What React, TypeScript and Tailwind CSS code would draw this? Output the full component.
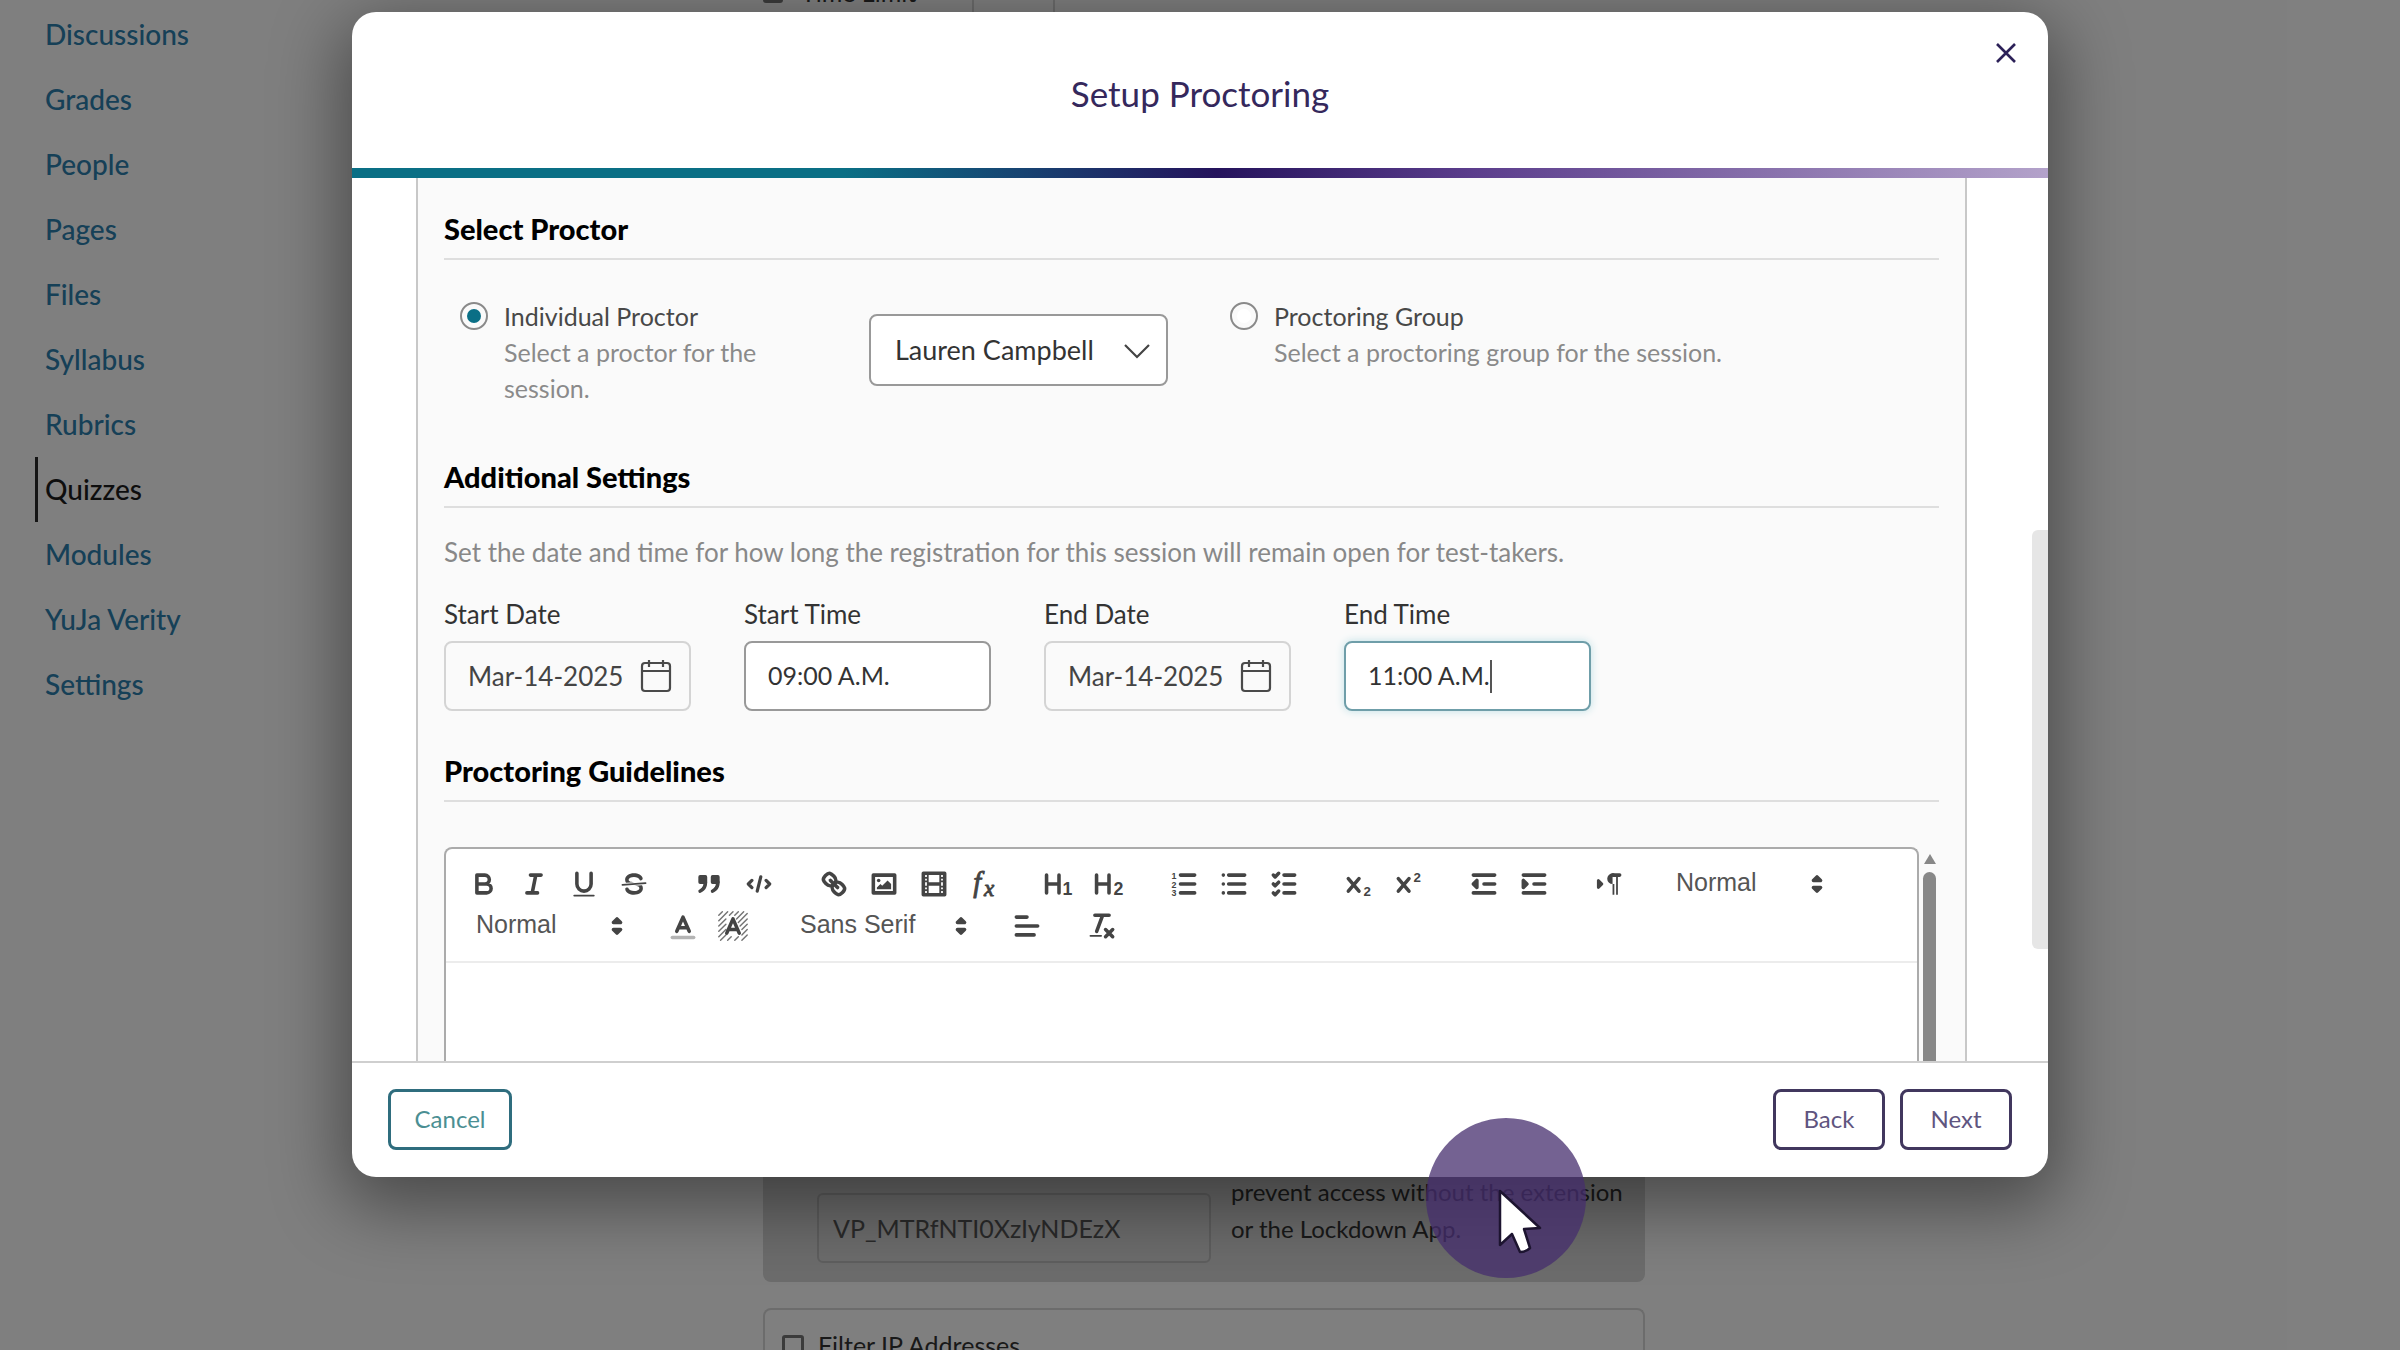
import type { ReactNode } from "react";

const navItems = [
  "Discussions",
  "Grades",
  "People",
  "Pages",
  "Files",
  "Syllabus",
  "Rubrics",
  "Quizzes",
  "Modules",
  "YuJa Verity",
  "Settings",
];

function CourseNav() {
  return (
    <nav aria-label="Course" className="w-[763px] shrink-0 pt-[2px] pl-[35px]">
      <ul>
        {navItems.map((item) => (
          <li key={item}>
            <a
              href="#"
              aria-current={item === "Quizzes" ? "page" : undefined}
              className={
                item === "Quizzes"
                  ? "flex h-[65px] items-center border-l-[3px] border-[#2a2a2a] pb-[2px] pl-[7px] text-[28px] font-medium text-[#1c1c1c]"
                  : "flex h-[65px] items-center border-l-[3px] border-transparent pb-[2px] pl-[7px] text-[28px] font-medium text-[#2c80ae]"
              }
            >
              {item}
            </a>
          </li>
        ))}
      </ul>
    </nav>
  );
}

function QuizSettings() {
  return (
    <main className="mr-[755px] flex min-w-0 flex-1 flex-col text-[25px] text-[#333]">
      <div className="-mt-[25px] flex h-[45px] shrink-0">
        <label className="flex h-[36px] w-[209px] items-center gap-[18px]">
          <input type="checkbox" className="size-5 appearance-none rounded-[3px] border-[3px] border-[#777]" />
          Time Limit
        </label>
        <div className="w-[83px] border-x-2 border-[#d8d8d8]" />
      </div>
      <section className="flex flex-1 flex-col justify-end rounded-b-lg bg-[#d8d8d8] pb-[19px] pl-[54px]">
        <div className="flex gap-5">
          <input
            aria-label="Access code"
            readOnly
            value="VP_MTRfNTI0XzIyNDEzX"
            className="h-[70px] w-[394px] shrink-0 rounded-md border-2 border-[#bcbcbc] bg-transparent px-[14px] text-[#555]"
          />
          <p className="-mt-5 text-2xl leading-[37px] whitespace-nowrap">
            prevent access without the extension
            <br />
            or the Lockdown App.
          </p>
        </div>
      </section>
      <section className="mt-[26px] h-[42px] shrink-0 overflow-hidden rounded-t-lg border-2 border-b-0 border-[#d8d8d8] px-[17px] pt-[17px]">
        <label className="flex items-center gap-[14px]">
          <input type="checkbox" className="size-[22px] appearance-none rounded-[3px] border-[3px] border-[#777]" />
          Filter IP Addresses
        </label>
      </section>
    </main>
  );
}

function SectionTitle({ children }: { children: ReactNode }) {
  return (
    <h2 className="flex h-[60px] shrink-0 items-center border-b-2 border-[#dedede] text-[29px] font-black text-black">
      {children}
    </h2>
  );
}

function RadioOption({ id, title, text, checked }: { id: string; title: string; text: string; checked?: boolean }) {
  return (
    <div className="flex items-start gap-4 text-[25px]">
      <input
        type="radio"
        name="proctor"
        id={id}
        defaultChecked={checked}
        className="mt-1 size-7 shrink-0 appearance-none rounded-full border-2 border-[#8a8a8a] bg-white bg-clip-content p-[5px] checked:bg-[#0a6f86]"
      />
      <label htmlFor={id} className="block leading-[36px] text-[#484848]">
        {title}
        <span className="block text-[#8a8a8a]">{text}</span>
      </label>
    </div>
  );
}

function CalendarIcon() {
  return (
    <svg viewBox="0 0 32 34" className="h-[34px] w-[32px] shrink-0" fill="none" stroke="#4a4a4a" strokeWidth="2.2">
      <rect x="2" y="4" width="28" height="28" rx="3" />
      <path d="M2 12H30M9 1V8M23 1V8" />
    </svg>
  );
}

function DateField({ id, label }: { id: string; label: string }) {
  return (
    <div className="w-[247px]">
      <label htmlFor={id} className="block leading-[36px] text-[#333]">
        {label}
      </label>
      <div className="mt-[9px] flex h-[70px] items-center rounded-lg border-2 border-[#d4d4d4] pr-[17px] pl-[22px]">
        <input id={id} readOnly value="Mar-14-2025" className="min-w-0 flex-1 bg-transparent text-[#444] outline-none" />
        <CalendarIcon />
      </div>
    </div>
  );
}

function TimeField({ id, label, value, active }: { id: string; label: string; value: string; active?: boolean }) {
  return (
    <div className="w-[247px]">
      <label htmlFor={id} className="block leading-[36px] text-[#333]">
        {label}
      </label>
      <div
        className={
          active
            ? "mt-[9px] flex h-[70px] items-center rounded-lg border-2 border-[#6f9ea9] bg-white px-[22px] shadow-[0_0_8px_#bfe0e6]"
            : "mt-[9px] flex h-[70px] items-center rounded-lg border-2 border-[#999] bg-white px-[22px]"
        }
      >
        <input id={id} readOnly value={value} className="field-sizing-content bg-transparent text-[25px] text-[#333] outline-none" />
        {active && <span className="h-[33px] w-[2px] bg-[#555]" />}
      </div>
    </div>
  );
}

function Icon({ children }: { children: ReactNode }) {
  return (
    <svg viewBox="0 0 18 18" className="size-8" fill="none" stroke="#444" strokeWidth="2" strokeLinecap="round" strokeLinejoin="round">
      {children}
    </svg>
  );
}

function Tool({ label, children }: { label: string; children: ReactNode }) {
  return (
    <button type="button" aria-label={label} className="flex h-[42px] w-[50px] items-center justify-center">
      <Icon>{children}</Icon>
    </button>
  );
}

function Group({ children }: { children: ReactNode }) {
  return <div className="flex">{children}</div>;
}

function Picker({ label, value, wide }: { label: string; value: string; wide?: boolean }) {
  return (
    <div className={wide ? "flex h-[42px] w-[194px] items-center" : "flex h-[42px] w-[174px] items-center"}>
      <select
        aria-label={label}
        className="min-w-0 flex-1 appearance-none bg-transparent pb-[3px] pl-[17px] font-['Liberation_Sans',sans-serif] text-[25px] text-[#555]"
      >
        <option>{value}</option>
      </select>
      <Icon>
        <path d="M7 11L9 13L11 11ZM7 7L9 5L11 7Z" fill="#444" />
      </Icon>
    </div>
  );
}

const serifItalic = "font-['Liberation_Serif',serif] italic";
const sans = "font-['Liberation_Sans',sans-serif] font-bold";

function HeaderShape() {
  return <path d="M2 4V14M9 4V14M2 9H9" />;
}

function LetterShape() {
  return <path d="M5.5 13L9 5L12.5 13M6.4 11H11.6" />;
}

function Toolbar() {
  return (
    <div role="toolbar" aria-label="Formatting" className="flex flex-wrap gap-x-[25px] border-b-2 border-[#ececec] py-[14px] pl-[13px]">
      <Group>
        <Tool label="Bold">
          <path d="M5 4H9.5A2.5 2.5 0 0 1 9.5 9H5ZM5 9H10.5A2.5 2.5 0 0 1 10.5 14H5Z" />
        </Tool>
        <Tool label="Italic">
          <path d="M7 4H13M5 14H11M8 14L10 4" />
        </Tool>
        <Tool label="Underline">
          <path d="M5 3V9a4 4 0 0 0 8 0V3" />
          <rect x="3" y="15" width="12" height="1" rx="0.5" fill="#444" stroke="none" />
        </Tool>
        <Tool label="Strikethrough">
          <path d="M15.5 8.5L2.5 9.5" strokeWidth="1" />
          <g fill="#444" stroke="none">
            <path d="M9.007,8C6.542,7.791,6,7.519,6,6.5,6,5.792,7.283,5,9,5c1.571,0,2.765.679,2.969,1.309a1,1,0,0,0,1.9-.617C13.356,4.106,11.354,3,9,3,6.2,3,4,4.538,4,6.5a3.2,3.2,0,0,0,.5,1.843Z" />
            <path d="M8.984,10C11.457,10.208,12,10.479,12,11.5c0,0.708-1.283,1.5-3,1.5-1.571,0-2.765-.679-2.969-1.309a1,1,0,1,0-1.9.617C4.644,13.894,6.646,15,9,15c2.8,0,5-1.538,5-3.5a3.2,3.2,0,0,0-.5-1.843Z" />
          </g>
        </Tool>
      </Group>
      <Group>
        <Tool label="Quote">
          <g fill="#444">
            <rect x="4" y="5" width="3" height="3" />
            <rect x="11" y="5" width="3" height="3" />
            <path d="M7,8c0,4.031-3,5-3,5" />
            <path d="M14,8c0,4.031-3,5-3,5" />
          </g>
        </Tool>
        <Tool label="Code">
          <path d="M5 7L3 9L5 11M13 7L15 9L13 11M10 5L8 13" strokeWidth="1.8" />
        </Tool>
      </Group>
      <Group>
        <Tool label="Link">
          <path d="M7 7L11 11" />
          <path d="M8.9,4.577a3.476,3.476,0,0,1,.36,4.679A3.476,3.476,0,0,1,4.577,8.9C3.185,7.5,2.035,6.4,4.217,4.217S7.5,3.185,8.9,4.577Z" />
          <path d="M13.423,9.1a3.476,3.476,0,0,0-4.679-.36,3.476,3.476,0,0,0,.36,4.679c1.392,1.392,2.5,2.542,4.679.36S14.815,10.5,13.423,9.1Z" />
        </Tool>
        <Tool label="Image">
          <rect x="3" y="4" width="12" height="10" />
          <circle cx="6" cy="7" r="1" fill="#444" stroke="none" />
          <path d="M5 12V11L7 9L8 10L11 7L13 9V12Z" fill="#444" stroke="none" />
        </Tool>
        <Tool label="Video">
          <rect x="3" y="3" width="12" height="12" />
          <path
            d="M5 3h1v12H5ZM12 3h1v12H12ZM5 8h8v2H5ZM3 5h3v1H3ZM3 7h3v1H3ZM3 10h3v1H3ZM3 12h3v1H3ZM12 5h3v1H12ZM12 7h3v1H12ZM12 10h3v1H12ZM12 12h3v1H12Z"
            fill="#444"
            stroke="none"
          />
        </Tool>
        <Tool label="Formula">
          <text x="3" y="13.5" fontSize="16" fill="#444" stroke="#444" strokeWidth="0.5" className={serifItalic}>f</text>
          <text x="9" y="16" fontSize="13" fill="#444" stroke="#444" strokeWidth="0.5" className={serifItalic}>x</text>
        </Tool>
      </Group>
      <Group>
        <Tool label="Heading 1">
          <HeaderShape />
          <text x="11" y="15" fontSize="10" fill="#444" stroke="none" className={sans}>1</text>
        </Tool>
        <Tool label="Heading 2">
          <HeaderShape />
          <text x="11.5" y="15" fontSize="10" fill="#444" stroke="none" className={sans}>2</text>
        </Tool>
      </Group>
      <Group>
        <Tool label="Numbered list">
          <path d="M7 4H15M7 9H15M7 14H15" />
          <g fill="#444" stroke="none" fontSize="5" className={sans}>
            <text x="2" y="6">1</text>
            <text x="2" y="11">2</text>
            <text x="2" y="16">3</text>
          </g>
        </Tool>
        <Tool label="Bulleted list">
          <path d="M6 4H15M6 9H15M6 14H15M3 4H3M3 9H3M3 14H3" />
        </Tool>
        <Tool label="Checklist">
          <path d="M9 4H15M9 9H15M9 14H15M3 4L4 5L6 3M3 9L4 10L6 8M3 14L4 15L6 13" />
        </Tool>
      </Group>
      <Group>
        <Tool label="Subscript">
          <path d="M3 6L9 13M9 6L3 13" />
          <text x="11.5" y="16" fontSize="7.5" fill="#444" stroke="none" className={sans}>2</text>
        </Tool>
        <Tool label="Superscript">
          <path d="M3 6L9 13M9 6L3 13" />
          <text x="11.5" y="8" fontSize="7.5" fill="#444" stroke="none" className={sans}>2</text>
        </Tool>
      </Group>
      <Group>
        <Tool label="Outdent">
          <path d="M3 14H15M3 4H15M9 9H15" />
          <path d="M5 7V11L3 9Z" fill="#444" />
        </Tool>
        <Tool label="Indent">
          <path d="M3 14H15M3 4H15M9 9H15" />
          <path d="M3 7V11L5 9Z" fill="#444" />
        </Tool>
      </Group>
      <Group>
        <Tool label="Text direction">
          <path d="M3 11L5 9L3 7Z" fill="#444" strokeWidth="1.6" />
          <path d="M11 4H15" />
          <path d="M11,3a3,3,0,0,0,0,6h1V3ZM11 4h1v11h-1ZM13 4h1v11h-1Z" fill="#444" stroke="none" />
        </Tool>
      </Group>
      <Picker label="Heading style" value="Normal" />
      <Picker label="Text size" value="Normal" />
      <Group>
        <Tool label="Text colour">
          <path d="M3 15.5H15" opacity="0.4" />
          <g transform="translate(0 -1)">
            <LetterShape />
          </g>
        </Tool>
        <Tool label="Background colour">
          <path
            d="M1 3L3 1M1 6L6 1M1 9L5 5M1 12L5 8M1 15L5 11M2 17L5 14M7 3L9 1M10 3L12 1M11 5L15 1M12 7L17 2M13 9L17 5M14 11L17 8M14 14L17 11M14 17L17 14M6 17L8 15M10 17L12 15"
            strokeWidth="0.8"
            opacity="0.75"
          />
          <LetterShape />
        </Tool>
      </Group>
      <Picker label="Font" value="Sans Serif" wide />
      <Group>
        <Tool label="Align">
          <path d="M3 9H15M3 14H13M3 4H9" />
        </Tool>
      </Group>
      <Group>
        <Tool label="Clear formatting">
          <path d="M5 3H13M6 12L9.350 3M11 11L15 15M15 11L11 15" />
          <rect x="2" y="14" width="7" height="1" rx="0.5" fill="#444" stroke="none" />
        </Tool>
      </Group>
    </div>
  );
}

function Editor() {
  return (
    <div className="flex flex-1 gap-1 pr-[3px]">
      <div className="flex flex-1 flex-col rounded-t-lg border-2 border-b-0 border-[#ababab] bg-white">
        <Toolbar />
        <textarea aria-label="Proctoring guidelines" className="flex-1 resize-none bg-transparent p-6 outline-none" />
      </div>
      <div className="flex w-[13px] flex-col items-center pt-[7px]">
        <svg viewBox="0 0 12 10" className="h-[10px] w-[12px]">
          <path d="M6 0L12 10H0Z" fill="#888" />
        </svg>
        <div className="mt-2 w-full flex-1 rounded-t-full bg-[#888]" />
      </div>
    </div>
  );
}

function ProctoringDialog() {
  return (
    <div
      role="dialog"
      aria-labelledby="dialog-title"
      className="relative flex flex-1 flex-col overflow-hidden rounded-[24px] bg-white text-[26px] shadow-[0_20px_70px_10px_rgba(0,0,0,0.42)]"
    >
      <header className="flex h-[156px] shrink-0 items-center justify-center pt-[6px]">
        <h1 id="dialog-title" className="text-[35px] text-[#35285c]">
          Setup Proctoring
        </h1>
        <button type="button" aria-label="Close" className="absolute top-[26px] right-[27px] flex size-[30px] items-center justify-center">
          <svg viewBox="0 0 20 20" className="size-5" stroke="#2c2158" strokeWidth="2.6">
            <path d="M1 1L19 19M19 1L1 19" />
          </svg>
        </button>
      </header>
      <div className="h-[10px] shrink-0 bg-[linear-gradient(90deg,#0a6f85_0%,#0a6f85_29%,#25135c_51%,#5b3d8c_66%,#b3a2ca_100%)]" />
      <div className="flex min-h-0 flex-1 overflow-hidden pl-[64px]">
        <div className="flex flex-1 flex-col border-x-2 border-[#c8c8c8] bg-[#fafafa] px-[26px] pt-[22px]">
          <SectionTitle>Select Proctor</SectionTitle>
          <div className="mt-[38px] flex items-start pl-[16px]">
            <div className="w-[320px]">
              <RadioOption id="individual" title="Individual Proctor" text="Select a proctor for the session." checked />
            </div>
            <div className="relative mt-4 ml-[89px]">
              <select
                aria-label="Proctor"
                className="h-[72px] w-[299px] appearance-none rounded-lg border-2 border-[#999] bg-white pl-[24px] text-[27px] text-[#333]"
              >
                <option>Lauren Campbell</option>
              </select>
              <svg
                viewBox="0 0 26 15"
                className="pointer-events-none absolute top-[30px] right-[18px] h-[15px] w-[26px]"
                fill="none"
                stroke="#444"
                strokeWidth="2.2"
              >
                <path d="M1 1L13 13L25 1" />
              </svg>
            </div>
            <div className="ml-[62px]">
              <RadioOption id="group" title="Proctoring Group" text="Select a proctoring group for the session." />
            </div>
          </div>
          <div className="mt-[42px]">
            <SectionTitle>Additional Settings</SectionTitle>
          </div>
          <p className="mt-[26px] leading-[36px] text-[#888]">
            Set the date and time for how long the registration for this session will remain open for test-takers.
          </p>
          <div className="mt-[26px] flex gap-[53px]">
            <DateField id="start-date" label="Start Date" />
            <TimeField id="start-time" label="Start Time" value="09:00 A.M." />
            <DateField id="end-date" label="End Date" />
            <TimeField id="end-time" label="End Time" value="11:00 A.M." active />
          </div>
          <div className="mt-[31px] mb-[45px]">
            <SectionTitle>Proctoring Guidelines</SectionTitle>
          </div>
          <Editor />
        </div>
        <div className="ml-[65px] flex w-[16px] flex-col">
          <div className="mt-[352px] h-[419px] rounded-l-md bg-[#e6e6e6]" />
        </div>
      </div>
      <footer className="flex h-[116px] shrink-0 items-center gap-[15px] border-t-2 border-[#cfcfcf] px-[36px] pb-[2px] text-2xl">
        <button type="button" className="mr-auto h-[61px] w-[124px] rounded-lg border-[3px] border-[#2f6d7e] text-[#4b8f93]">
          Cancel
        </button>
        <button type="button" className="h-[61px] w-[112px] rounded-lg border-[3px] border-[#41375e] text-[#5f5580]">
          Back
        </button>
        <button type="button" className="h-[61px] w-[112px] rounded-lg border-[3px] border-[#41375e] text-[#5f5580]">
          Next
        </button>
      </footer>
    </div>
  );
}

function Pointer() {
  return (
    <div className="pointer-events-none absolute top-[1118px] left-[1426px] size-[160px] rounded-full bg-[rgba(70,46,110,0.75)]">
      <svg viewBox="-3 -3 48 68" className="absolute top-[70px] left-[71px] h-[68px] w-[48px]">
        <path d="M0 0L40 37L24 38L30 57Q26 61 20 61L12 43L0 54Z" fill="#fff" stroke="#1d1430" strokeWidth="2.5" strokeLinejoin="round" />
      </svg>
    </div>
  );
}

export default function App() {
  return (
    <div className="relative h-screen overflow-hidden bg-white font-[Lato,sans-serif]">
      <div className="flex h-full">
        <CourseNav />
        <QuizSettings />
      </div>
      <div className="absolute inset-0 flex bg-black/50 px-[352px] pt-[12px] pb-[173px]">
        <ProctoringDialog />
      </div>
      <Pointer />
    </div>
  );
}
